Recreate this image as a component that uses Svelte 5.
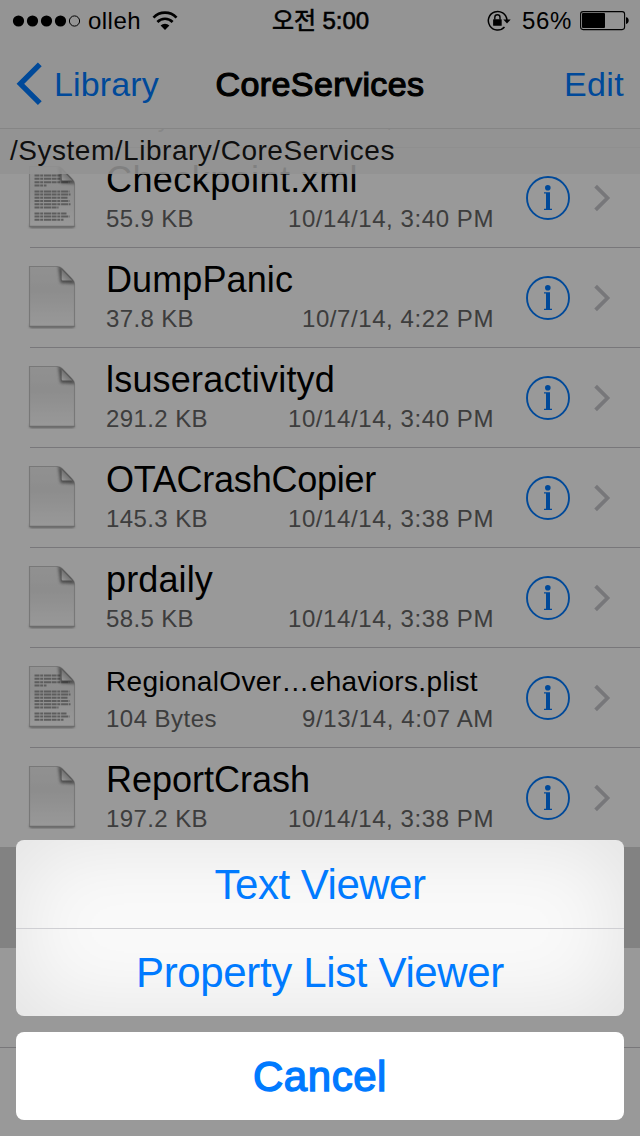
<script>
    const scrolledRow = { size: '82 Bytes', date: '10/14/14, 3:40 PM', sizeWidth: 98, dateWidth: 206 };

    const files = [
        { name: 'Checkpoint.xml', width: 252, size: '55.9 KB', sizeWidth: 88, date: '10/14/14, 3:40 PM', dateWidth: 206, text: true },
        { name: 'DumpPanic', width: 187, size: '37.8 KB', sizeWidth: 88, date: '10/7/14, 4:22 PM', dateWidth: 192 },
        { name: 'lsuseractivityd', width: 229, size: '291.2 KB', sizeWidth: 102, date: '10/14/14, 3:40 PM', dateWidth: 206 },
        { name: 'OTACrashCopier', width: 270, size: '145.3 KB', sizeWidth: 102, date: '10/14/14, 3:38 PM', dateWidth: 206 },
        { name: 'prdaily', width: 107, size: '58.5 KB', sizeWidth: 88, date: '10/14/14, 3:38 PM', dateWidth: 206 },
        { name: 'RegionalOver…ehaviors.plist', width: 372, size: '104 Bytes', sizeWidth: 111, date: '9/13/14, 4:07 AM', dateWidth: 192, text: true, small: true },
        { name: 'ReportCrash', width: 204, size: '197.2 KB', sizeWidth: 102, date: '10/14/14, 3:38 PM', dateWidth: 206 }
    ];

    // Paragraphs on the text document icon: [y, line width]
    const docLines = [
        [11.5, 26], [14.8, 27], [18.2, 35], [21.4, 12],
        [27.4, 35], [30.6, 36], [33.8, 33], [37, 35], [40.2, 36], [43.4, 24],
        [49.4, 32], [52.6, 35], [55.8, 29]
    ];

    // Spread the letters so that the text takes up the given width
    function fit(node, width) {
        const range = document.createRange();
        range.selectNodeContents(node);
        const natural = range.getBoundingClientRect().width;
        node.style.letterSpacing = `${(width - natural) / node.textContent.length}px`;
    }
</script>

<div class="screen">
    <header>
        <div class="status">
            <svg class="signal" width="70" height="14" viewBox="0 0 70 14">
                {#each [0, 1, 2, 3] as i}
                    <circle cx={6.5 + i * 14} cy="7" r="5.6" />
                {/each}
                <circle cx="62.5" cy="7" r="5.1" fill="none" stroke="#000" />
            </svg>
            <span class="carrier" use:fit={53}>olleh</span>
            <svg class="wifi" width="26" height="20" viewBox="0 0 26 20">
                <path d="M1.5 6.6A16 16 0 0 1 24.5 6.6" fill="none" stroke="#000" stroke-width="2.7" />
                <path d="M5.4 11A10.6 10.6 0 0 1 20.6 11" fill="none" stroke="#000" stroke-width="2.6" />
                <path d="M8.6 14.5A6.2 6.2 0 0 1 17.4 14.5L13 19Z" />
            </svg>
            <span class="time" use:fit={97}>오전 5:00</span>
            <svg class="lock" width="24" height="22" viewBox="0 0 24 22">
                <path d="M17.5 17A9.3 9.3 0 1 1 19.9 10" fill="none" stroke="#000" stroke-width="1.5" />
                <path d="M16.3 9.4H23.7L20 13.6Z" />
                <rect x="6.1" y="9.2" width="8.6" height="6.6" rx=".6" />
                <path d="M7.8 9.5V7.4a2.6 2.6 0 0 1 5.2 0V9.5" fill="none" stroke="#000" stroke-width="1.4" />
            </svg>
            <span class="percent" use:fit={50}>56%</span>
            <svg class="battery" width="50" height="20" viewBox="0 0 50 20">
                <rect x=".6" y=".6" width="44" height="18" rx="2.5" fill="none" stroke="#000" stroke-width="1.1" />
                <rect x="2" y="2" width="23" height="15" rx="1" />
                <path d="M46 6.3c3.6 0 3.6 6.6 0 6.6Z" />
            </svg>
        </div>
        <nav>
            <button class="back">
                <svg width="26" height="44" viewBox="0 0 26 44">
                    <path d="M23.8 2.4L4.4 21.8L23.8 41.2" fill="none" stroke="#007aff" stroke-width="5.4" />
                </svg>
                <span use:fit={105}>Library</span>
            </button>
            <h1 use:fit={209}>CoreServices</h1>
            <button class="edit"><span use:fit={60}>Edit</span></button>
        </nav>
    </header>
    <div class="path"><span use:fit={385}>/System/Library/CoreServices</span></div>

    <main>
        <div class="row scrolled">
            <div class="info">
                <div class="meta">
                    <span use:fit={scrolledRow.sizeWidth}>{scrolledRow.size}</span>
                    <span use:fit={scrolledRow.dateWidth}>{scrolledRow.date}</span>
                </div>
            </div>
        </div>
        {#each files as file}
            <div class="row">
                <svg class="doc" width="50" height="66" viewBox="0 0 50 66">
                    <defs>
                        <linearGradient id="paper" x1="0" y1="0" x2="0" y2="1">
                            <stop offset="0" stop-color="#f2f2f2" />
                            <stop offset=".4" stop-color="#ebebeb" />
                            <stop offset="1" stop-color="#fff" />
                        </linearGradient>
                        <linearGradient id="fold" x1="0" y1="1" x2="1" y2="0">
                            <stop offset="0" stop-color="#fff" />
                            <stop offset=".6" stop-color="#b4b4b4" />
                        </linearGradient>
                        <filter id="soft" x="-50%" y="-50%" width="200%" height="200%">
                            <feGaussianBlur stdDeviation="1.5" />
                        </filter>
                        <clipPath id="sheet">
                            <path d="M2.5 2.5H30Q33 2.5 35 4.5L45.5 15.5Q47.5 17.5 47.5 20V62.5H2.5Z" />
                        </clipPath>
                    </defs>
                    <path d="M3 61H47V63.5H3Z" fill="#777" filter="url(#soft)" />
                    <path d="M2.5 2.5H30Q33 2.5 35 4.5L45.5 15.5Q47.5 17.5 47.5 20V62.5H2.5Z" fill="url(#paper)" stroke="#c9c9c9" stroke-width="1.2" />
                    <path d="M2.5 62.5H47.5" stroke="#b4b4b4" stroke-width="1.4" />
                    {#if file.text}
                        {#each docLines as [y, length]}
                            <path d="M7.5 {y}h{length}" stroke="#9c9c9c" stroke-width="2" stroke-dasharray="5 .7 3 .8 7 .6" />
                        {/each}
                    {/if}
                    <g clip-path="url(#sheet)">
                        <path d="M31 1L33.5 19L49 20L44 12Z" fill="#333" opacity=".6" filter="url(#soft)" />
                    </g>
                    <path d="M34.6 5.5L45.5 16.5H36Q34.6 16.5 34.6 15Z" fill="url(#fold)" />
                </svg>
                <div class="info">
                    <div class="name" class:small={file.small}><span use:fit={file.width}>{file.name}</span></div>
                    <div class="meta">
                        <span use:fit={file.sizeWidth}>{file.size}</span>
                        <span use:fit={file.dateWidth}>{file.date}</span>
                    </div>
                </div>
                <svg class="detail" width="44" height="44" viewBox="0 0 44 44">
                    <circle cx="22" cy="22" r="21" fill="none" stroke="#007aff" stroke-width="1.9" />
                    <circle cx="21.8" cy="11.7" r="2.8" fill="#007aff" />
                    <path d="M18 16.2H24V32.8H26V34H18V32.8H20V17.5H18Z" fill="#007aff" />
                </svg>
                <svg class="chevron" width="18" height="28" viewBox="0 0 18 28">
                    <path d="M2.6 2.1L14.5 14L2.6 25.9" fill="none" stroke="#c7c7cc" stroke-width="3.8" />
                </svg>
            </div>
        {/each}
        <div class="row selected"></div>
        <div class="row empty"></div>
        <div class="row empty"></div>
    </main>

    <div class="overlay">
        <div class="actions">
            <button><span use:fit={211}>Text Viewer</span></button>
            <button><span use:fit={368}>Property List Viewer</span></button>
        </div>
        <button class="cancel"><span use:fit={134}>Cancel</span></button>
    </div>
</div>

<style>
    :global(body) {
        background: #999;
    }
    .screen {
        position: relative;
        width: 640px;
        height: 1136px;
        overflow: hidden;
        background: #fff;
        font-family: "Liberation Sans", "Noto Sans CJK KR", sans-serif;
        color: #000;
    }
    span, h1 {
        white-space: nowrap;
    }
    button {
        padding: 0;
        border: none;
        background: none;
        font-family: inherit;
        color: #007aff;
    }
    header {
        position: relative;
        z-index: 2;
        box-sizing: border-box;
        height: 129px;
        background: #f7f7f7;
        border-bottom: 1px solid #dedede;
    }
    .status {
        display: flex;
        align-items: center;
        height: 40px;
        padding: 1px 10px 0 12px;
        box-sizing: border-box;
        font-size: 24px;
    }
    .status svg {
        flex: none;
    }
    .carrier {
        margin-left: 6px;
    }
    .wifi {
        margin-left: 11px;
    }
    .time {
        margin-left: 94px;
        line-height: 36px;
        -webkit-text-stroke: 0.6px #000;
    }
    .lock {
        margin-left: auto;
        margin-right: 11px;
    }
    .battery {
        margin-left: 8px;
    }
    nav {
        display: grid;
        grid-template-columns: 1fr auto 1fr;
        align-items: center;
        height: 88px;
    }
    .back {
        display: flex;
        align-items: center;
        gap: 12px;
        padding-left: 16px;
        font-size: 34px;
    }
    .back svg {
        flex: none;
    }
    h1 {
        margin: 0;
        font-size: 34px;
        font-weight: normal;
        line-height: 44px;
        -webkit-text-stroke: 1.2px #000;
    }
    .edit {
        padding-right: 16px;
        font-size: 34px;
        text-align: right;
    }
    .path {
        position: relative;
        z-index: 1;
        height: 45px;
        padding-left: 10px;
        background: rgba(244, 244, 244, 0.88);
        font-size: 28px;
        line-height: 43px;
        color: #1a1a1a;
    }
    /* The list scrolls beneath the bars */
    main {
        margin-top: -126px;
    }
    .row {
        display: flex;
        align-items: center;
        box-sizing: border-box;
        height: 100px;
        padding: 0 28px 0 27px;
        background: linear-gradient(#c8c7cc, #c8c7cc) 30px 99px / 610px 1px no-repeat;
    }
    .scrolled {
        padding-left: 77px;
    }
    .scrolled .info {
        padding-top: 57px;
    }
    .selected {
        height: 100px;
        margin-top: -1px;
        padding: 0;
        background: #d9d9d9;
        border-bottom: 1px solid #d9d9d9;
        box-sizing: content-box;
    }
    .empty {
        background: linear-gradient(#c8c7cc, #c8c7cc) 0 99px / 640px 1px no-repeat;
    }
    .doc, .detail, .chevron {
        flex: none;
    }
    .doc {
        margin-bottom: 3px;
    }
    .info {
        flex: none;
        box-sizing: border-box;
        width: 388px;
        height: 100px;
        margin-left: 29px;
        padding-top: 10px;
    }
    .name {
        box-sizing: border-box;
        height: 44px;
        margin-bottom: 3px;
        font-size: 36px;
        line-height: 44px;
    }
    .small {
        padding-top: 2px;
        font-size: 28px;
    }
    .meta {
        display: flex;
        justify-content: space-between;
        font-size: 24px;
        line-height: 28px;
        color: #666;
    }
    .detail {
        margin-left: 32px;
    }
    .chevron {
        margin-left: 23px;
    }
    .overlay {
        position: absolute;
        inset: 0;
        z-index: 3;
        display: flex;
        flex-direction: column;
        justify-content: flex-end;
        gap: 16px;
        padding: 16px;
        background: rgba(0, 0, 0, 0.4);
    }
    .actions {
        overflow: hidden;
        border-radius: 8px;
        background: #fafafa;
        box-shadow: inset 0 0 90px rgba(0, 0, 0, 0.1);
    }
    .actions button {
        display: block;
        width: 100%;
        height: 88px;
        padding-top: 2px;
        font-size: 42px;
    }
    .actions button + button {
        padding-top: 0;
        border-top: 1px solid #cfcfd3;
    }
    .cancel {
        height: 88px;
        padding-top: 2px;
        border-radius: 8px;
        background: #fff;
        font-size: 42px;
        -webkit-text-stroke: 1.4px #007aff;
    }
</style>
